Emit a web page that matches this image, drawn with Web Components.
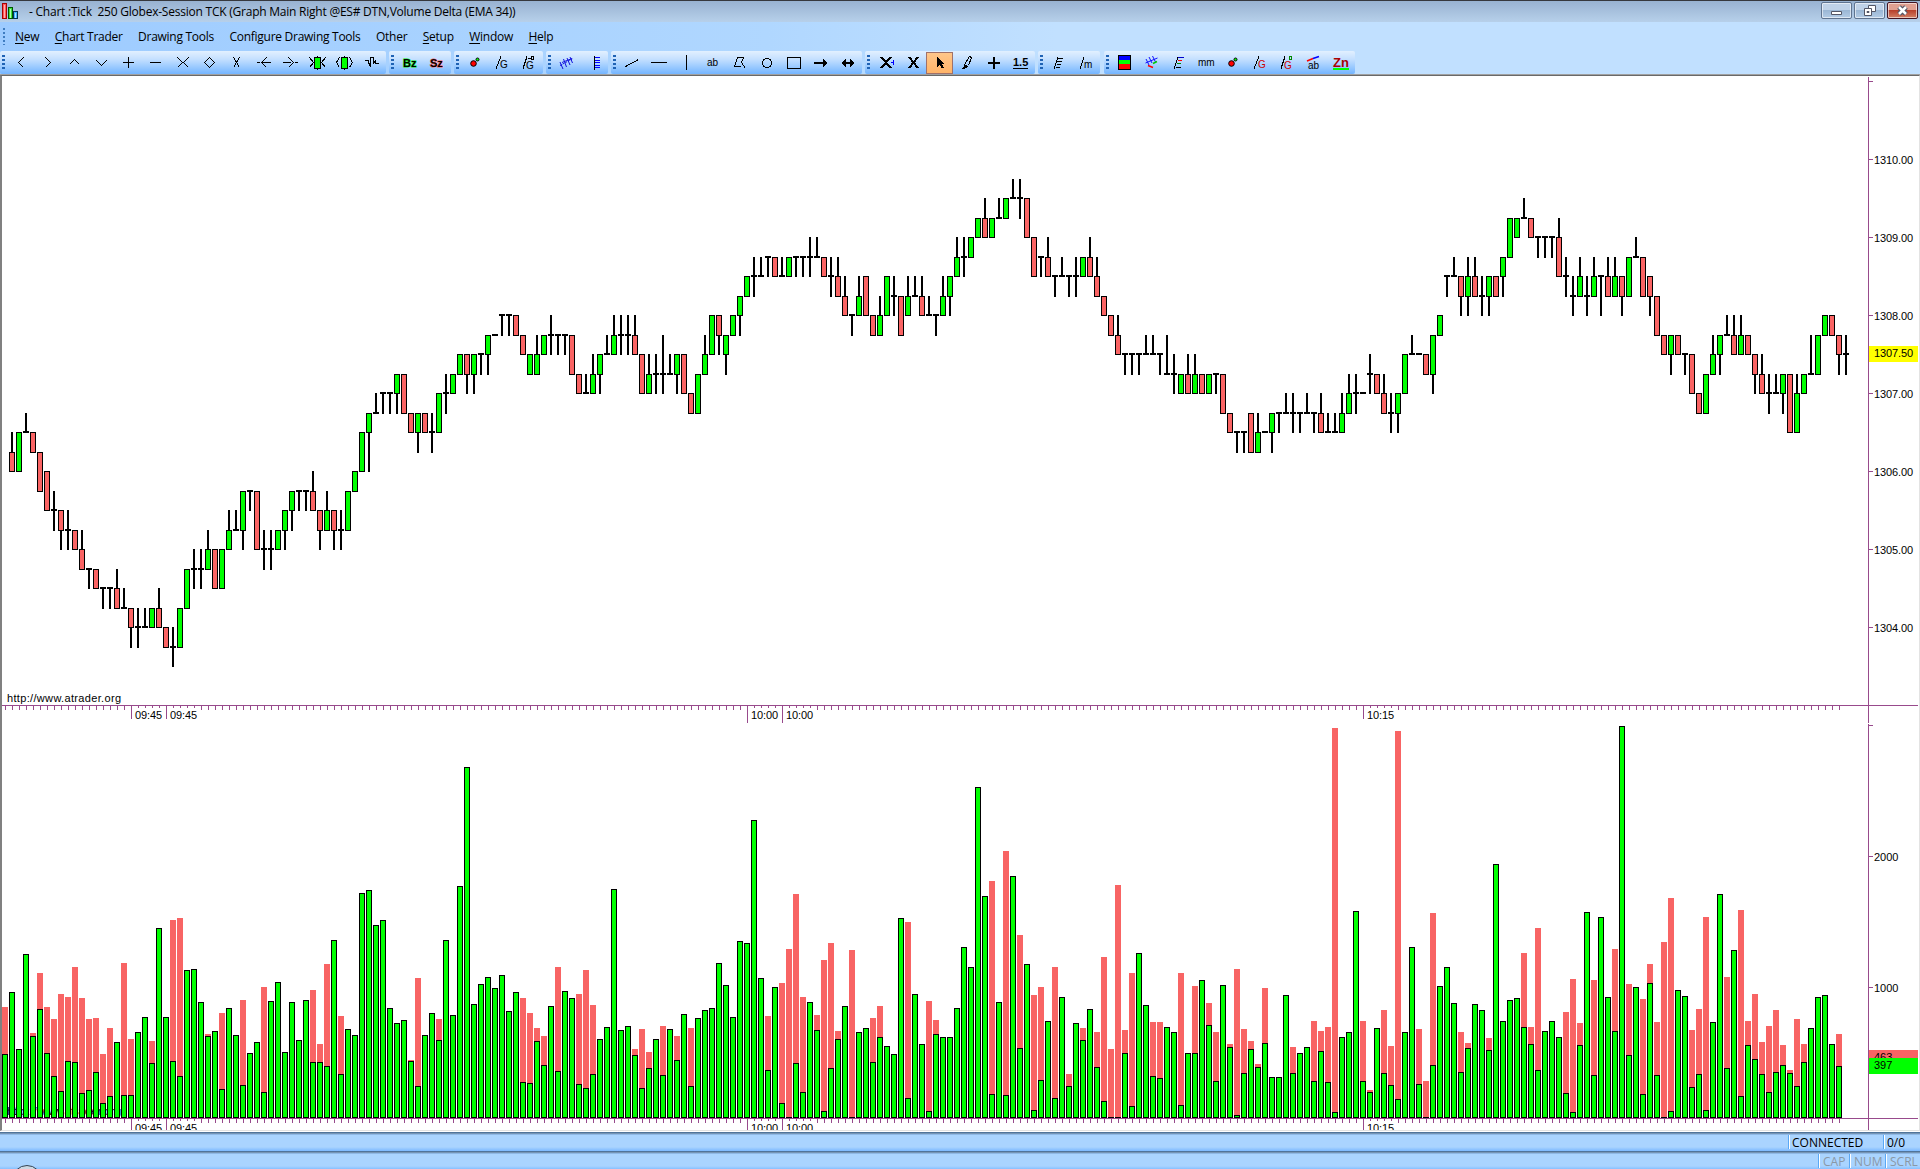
<!DOCTYPE html>
<html lang="en">
<head>
<meta charset="utf-8">
<title>Chart</title>
<style>
	html, body {height: 100%; margin: 0; overflow: hidden;}
	body {font-family: "Open Sans", "Noto Sans", sans-serif; font-size: 12px; color: #000;}
</style>
</head>
<body>
<chart-window></chart-window>
<script>
const define = (name, html, setup) => customElements.define(name, class extends HTMLElement {
	constructor() {
		super();
		this.attachShadow({mode: 'open'}).innerHTML = html;
	}
	connectedCallback() {setup && setup.call(this, this.shadowRoot);}
});

// one glyph per toolbar button, drawn on a 21x21 grid
const icons = {
	left: '<path d="M13.5 5.5l-5 5 5 5"/>',
	right: '<path d="M8.5 5.5l5 5-5 5"/>',
	up: '<path d="M5.5 12.5l5-5 5 5"/>',
	down: '<path d="M5.5 8.5l5 5 5-5"/>',
	plus: '<path d="M5 10.5h11M10.5 5v11"/>',
	minus: '<path d="M5 10.5h11"/>',
	hcross: '<path d="M5.5 5.5l5 5-5 5M16.5 5.5l-5 5 5 5"/>',
	diamond: '<path d="M10.5 5.5l5 5-5 5-5-5z"/>',
	vcross: '<path d="M7.5 5.5l3 5 3-5M7.5 15.5l3-5 3 5"/>',
	inl: '<path d="M4 10.5h3M13.5 5.5l-5 5 5 5M9 10.5h9"/>',
	inr: '<path d="M3 10.5h8M8.5 5.5l5 5-5 5M15 10.5h3"/>',
	gx: '<path d="M2.5 5.5l4 5-4 5M18.500 5.5l-4 5 4 5M10.500 3.500v14"/><path d="M7.500 5.500h6v11h-6z" fill="#0f0"/>',
	gb: '<path d="M5.5 5.5l-3 5 3 5M15.500 5.5l3 5-3 5M10.500 3.500v14"/><path d="M7.500 5.500h6v11h-6z" fill="#0f0"/>',
	wave: '<path d="M4 8.5h3.500v2l2 4v-9h3v6l2-3v3h3"/>',
	lines: '<g stroke="#11d" shape-rendering="auto"><path d="M4 13.500l13-7" stroke-dasharray="2 1"/><path d="M4 10l3 7M7.500 7l3 8M11 6l3 7M14 5l2.500 6"/><path d="M6 10.500l10-4"/></g>',
	ladder: '<path d="M11.500 4v14"/><path d="M12 5.500h5M12 8h5M12 10.500h5M12 13h5M12 15.500h5" stroke="#00f"/>',
	trend: '<path d="M4.5 14.5l13-7"/>',
	hline: '<path d="M3 10.5h16"/>',
	vline: '<path d="M11.500 3v15"/>',
	poly: '<path d="M8.500 5.500h6l-2 5 4 6M8.500 5.500l-3 9h6"/>',
	circle: '<ellipse cx="11" cy="11" rx="4.500" ry="4.500"/>',
	rect: '<path d="M4.500 5.500h13v11h-13z"/>',
	arrow: '<path d="M4 11h13" stroke-width="2"/><path d="M13.500 7v8M14.500 8v6M15.500 9v4"/>',
	arrows: '<path d="M5 11h12" stroke-width="2"/><path d="M13.500 7v8M14.500 8v6M15.500 9v4M8.500 7v8M7.500 8v6M6.500 9v4"/>',
	delx: '<path d="M6 5l10 11M16 5l-10 11" stroke-width="2"/><path d="M16 10.5h3M18.500 8v5" stroke="#00f"/>',
	del: '<path d="M7 5l9 11M16 5l-9 11" stroke-width="2"/>',
	pointer: '<path d="M7.5 4.500v11l3-3 2 4 2-1-2-4h3z" fill="#000" stroke="none"/>',
	pen: '<path d="M13.500 4.5l2 1-3 8-4 3v-4zM6.500 17l4-4"/>',
	cross: '<path d="M5 11h12M11 5v12" stroke-width="2"/>',
	flag: '<path d="M6 16.500l4-11M10 6.5h5M9 9.5h5M9 12.5h4M8 15.5h4"/>',
	bands: '<path d="M4 3h13v5h-13z" fill="#00f" stroke="none"/><path d="M4 8h13v4h-13z" fill="#0f0" stroke="none"/><path d="M4 12h13v5h-13z" fill="#f00" stroke="none"/><path d="M4.500 3.5h12v14h-12z"/>',
	fans: '<g shape-rendering="auto"><path d="M5 7l3 6M8 5l3 6M11.500 4l3 6M4.500 11l12-5" stroke="#11f"/><path d="M7 13.500l5 2" stroke="#f00" stroke-width="1.500"/><path d="M12 11.5l4-2" stroke="#0c0" stroke-width="1.500"/></g>',
	flagc: '<path d="M6 16.500l4-11M8 15.500h5"/><path d="M10 5.500h6" stroke="#00c"/><path d="M10 8.500h4" stroke="#f00"/><path d="M9 11.500h4" stroke="#080"/>',
	balls: '<g shape-rendering="auto"><circle cx="9.500" cy="11.500" r="2.800" fill="#f00"/><circle cx="13.500" cy="7.500" r="1.500" fill="#0f0"/></g>',
	gann: '<path d="M5 16.5l5-12"/><text x="9" y="16">G</text>',
	gann2: '<path d="M5 16.5l4-12M9.500 6.500h3"/><circle cx="14.500" cy="6" r="1.500"/><text x="8" y="17">G</text>',
	gannc: '<path d="M5 16.5l5-12"/><text x="9" y="16" fill="#c00">G</text>',
	gannc2: '<path d="M5 16.5l4-12"/><circle cx="14.500" cy="6" r="1.500" stroke="#080"/><text x="8" y="17" fill="#c00">G</text>',
	ab: '<text x="5" y="14">ab</text>',
	abc: '<g shape-rendering="auto" stroke-width="1.500"><path d="M4 9l6-2.500" stroke="#f00"/><path d="M10 6.500l6-2" stroke="#00f"/></g><text x="5" y="17">ab</text>',
	m: '<path d="M5 16.500l4-11"/><text x="9" y="16">m</text>',
	mm: '<text x="3" y="14">mm</text>',
	bz: '<text x="4" y="15" class="b" stroke="#0e0">Bz</text>',
	sz: '<text x="4" y="15" class="b" stroke="#f55">Sz</text>',
	num: '<text x="3" y="14" class="b">1.5</text><path d="M3 16.500h15"/>',
	zn: '<path d="M3 16h16v2h-16z" fill="#0f0" stroke="none"/><text x="3" y="15" class="z" fill="#a00">Zn</text>',
};

define('tool-button', `
<style>
	:host {display: flex; align-items: center; justify-content: center; width: 27px; height: 22px; box-sizing: border-box;}
	:host([on]) {background: linear-gradient(#ffc68a, #ffb469); border: 1px solid #a0716a;}
	svg {width: 21px; height: 21px; flex: none; fill: none; stroke: #000; shape-rendering: crispEdges;}
	text {font: 10px "Liberation Sans", sans-serif; fill: #000; stroke: none;}
	.b {font: bold 11px "Liberation Sans", sans-serif; stroke-width: 1px; paint-order: stroke;}
	.z {font: bold 13px "Liberation Sans", sans-serif;}
</style>
<svg viewBox="0 0 21 21"></svg>
`, function(root) {
	const svg = root.querySelector('svg');
	svg.innerHTML = icons[this.getAttribute('icon')];
	svg.querySelectorAll('text').forEach(t => {
		t.style.fill = t.getAttribute('fill');
		t.style.stroke = t.getAttribute('stroke');
	});
});

define('tool-group', `
<style>
	:host {
		display: flex; align-items: center; height: 23px; padding-right: 1px; border-radius: 2px;
		background: linear-gradient(#e2f0ff, #c5e0ff 35%, #a6d0ff 60%, #74b5ff);
	}
	i {
		width: 3px; height: 15px; margin: 0 2px;
		background: repeating-linear-gradient(#1f62b4 0 2px, transparent 2px 4px);
	}
</style>
<i></i><slot></slot>
`);

define('tool-bar', `
<style>
	:host {display: flex; height: 23px;}
	tool-group {flex: none;}
</style>
`, function(root) {
	const groups = [
		['left right up down plus minus hcross diamond vcross inl inr gx gb wave', 3],
		['bz sz', 3],
		['balls gann gann2', 3],
		['lines ladder', 3],
		['trend hline vline ab poly circle rect arrow arrows', 3],
		['delx del pointer pen cross num', 3],
		['flag m', 4],
		['bands fans flagc mm balls gannc gannc2 abc zn', 0],
	];
	root.innerHTML += groups.map(([names, gap]) => `<tool-group style="margin-right:${gap}px">${
		names.split(' ').map(n => `<tool-button icon="${n}"${n === 'pointer' ? ' on' : ''}></tool-button>`).join('')
	}</tool-group>`).join('');
});

define('title-bar', `
<style>
	:host {
		display: flex; align-items: center; height: 22px; box-sizing: border-box; padding-right: 2px;
		border-top: 1px solid #36383d; background: linear-gradient(#98b2d1, #b7d0ea);
	}
	.logo {width: 19px; height: 19px; margin-right: 10px; shape-rendering: crispEdges;}
	span {flex: 1; white-space: pre; font-size: 12px; letter-spacing: -.23px;}
	b {
		width: 31px; height: 17px; margin: 0 0 2px 2px; box-sizing: border-box; display: flex;
		align-items: center; justify-content: center; border: 1px solid #5f7490; border-radius: 2px;
		box-shadow: inset 0 0 0 1px #ffffff90; background: linear-gradient(#bfd2e8 50%, #9bb7d5 50%, #b3cce6);
	}
	b.x {border-color: #431422; background: linear-gradient(#e0a091 50%, #b8412c 50%, #d38065);}
	b svg {width: 13px; height: 11px;}
</style>
<svg class="logo" viewBox="0 0 19 19">
	<path d="M2.500 1.500h4v15h-4z" fill="#ff5a5a" stroke="#a00"/><path d="M4 3h1v13h-1z" fill="#ffb0b0"/>
	<path d="M8.500 5.500h4v11h-4z" fill="#3ce03c" stroke="#050"/><path d="M10 7h1v9h-1z" fill="#b0ffb0"/>
	<path d="M13.500 9.500h4v7h-4z" fill="#3cb4ff" stroke="#035"/><path d="M15 11h1v5h-1z" fill="#b4e4ff"/>
</svg>
<span>- Chart :Tick  250 Globex-Session TCK (Graph Main Right @ES# DTN,Volume Delta (EMA 34))</span>
<b><svg viewBox="0 0 13 11"><path d="M1.500 6.500h10v3h-10z" fill="#fff" stroke="#535666"/></svg></b>
<b><svg viewBox="0 0 13 11"><path d="M5.500.500h7v6h-7z" fill="#fff" stroke="#535666"/><path d="M1.500 3.500h7v7h-7z" fill="#fff" stroke="#535666"/><path d="M4 6.500h2v1h-2z" stroke="#535666"/></svg></b>
<b class="x"><svg viewBox="0 0 13 11"><path d="M3 2l7 7M10 2l-7 7" stroke="#535666" stroke-width="5"/><path d="M3 2l7 7M10 2l-7 7" stroke="#fff" stroke-width="2.500"/></svg></b>
`);

define('menu-bar', `
<style>
	:host {display: flex; align-items: center; height: 29px; font-size: 12px;}
	i {
		width: 2px; height: 17px; margin: 0 10px 0 3px;
		background: repeating-linear-gradient(#3f7cc0 0 2px, transparent 2px 4px);
	}
	nav {display: flex; gap: 15.5px; letter-spacing: -.27px;}
	u {text-underline-offset: 2px;}
</style>
<i></i>
<nav>
	<span><u>N</u>ew</span><span><u>C</u>hart Trader</span><span>Drawing Tools</span>
	<span>Configure Drawing Tools</span><span>Other</span><span><u>S</u>etup</span>
	<span><u>W</u>indow</span><span><u>H</u>elp</span>
</nav>
`);

const plotStyle = `
	:host {display: block;}
	svg {display: block; shape-rendering: crispEdges;}
	text {font: 11px "Liberation Sans", Arial, sans-serif;}
	.up {fill: #0f0; stroke: #000;}
	.down {fill: #fa6464; stroke: #000;}
	.ask {fill: #f86464;}
	.axis {fill: #984a8c;}
`;
const box = (x, y, w, h, cls) => `<rect x="${x}" y="${y}" width="${w}" height="${h}" class="${cls}"/>`;
const outlined = (x, y, w, h, cls) => box(x + .5, y + .5, w - 1, h - 1, cls);
const label = (x, y, text, width) => `<text x="${x}" y="${y}"${width ? ` textLength="${width}"` : ''}>${text}</text>`;
const STEP = 7;
const COUNT = 263;
const SITE = 'http://www.atrader.org';

// horizontal axis with its ticks; marks are [bar, length, caption]
const timeAxis = (y, marks) => {
	let out = box(2, y, 1916, 1, 'axis');
	for (let i = 0; i < COUNT; i++) out += box(5 + i * STEP, y + 1, 1, 4, 'axis');
	for (const [bar, size, text] of marks) {
		const x = 5 + bar * STEP;
		out += `<rect x="${x + 1}" y="${y + 3}" width="31" height="12" fill="#fff"/>`;
		out += box(x, y + 1, 1, size, 'axis') + label(x + 4, y + 14, text, 27);
	}
	return out;
};
const marks = [[18, 13, '09:45'], [23, 13, '09:45'], [106, 17, '10:00'], [111, 17, '10:00'], [194, 13, '10:15']];

// open/high/low/close, one letter per quarter point going down from a = 1310.00
const candles = `
poqq qoqo onoo oopp pprr qqss srts ssut tsut ttuu utvv vvwv vvww wwxw wwxw wvxx xwxx xxzy yxzy yxyy
yxyx xwyy yyzz zy{z zxzx xvxv vuwv vuwv vtvu uuww wuwu usut tstt trur rrsr rruu utvu utvu utut tsus
srtr rrsr rrsr rqss ssut trts ssut tsut trtr rqrq qoqo onqn nmnn mmnm mmnm mlnl llnn nnoo onpn nnoo
onpo omom mlnm mlml lklk kkml lkmk kklk kjlj jjjj iiji iiji iijj jjkk lklk ljlk kjkj jikj jjkj jjkj
jjll llmm mlmm mkml lkmk kjkk kikj jikj jikj jikk kkmm mkml lkml ljml lkll lkmk kkmm mmnn nlnl ljlk
kiki iikj kjlj jiji ihjh hghg gfhg gfgg ffgf ffgg gfgg gfgf ffgf ffgf fegf feff ffgg gfhg gfhh hgii
iiji igih ggii iijj jhji igig hgih hhjj igih hghh hgii ihii iiji igih hgig gegf fegf fefe eded dcee
eded dcdd dcdc cbcc cbdc ccee eegg ffgf fegg gghg gfgg gghg gfhg gfgf fegg gfhh hhii iijj jikk kklk
kklk kklk kjkk kjkk kklk ljll lkml mlml lkmm mkml llmm mlml llml llnn nnoo oopo oopo nnpp pnpo oooo
onpn nnon nmnn nmon nnon nmnn nnon nmoo onoo onoo omon nlnm mlnm mmmm lkml llmm mlnn nmon nmom mkmk
kjkk kkkk kkll ljmj jiji gghg gfgg ggih hfig gfhh hgih hgig gghh gfhf fdfd eded dcdd ddee eefe eefe
eefe edgg gfhg hgih hfhg hgih hfhg ggig gfhh hfhg ggih hfhf feff ffhh ggih hhjj jjkk kjlj jjkk kklk
kkmm mmnn nlnl ljlk kjlj jijj jikk kikj jjkk kkml lkmm mlnm mlmm mlnl lloo olom mlml ljll ljlj jiji
iijj jjlk kjlk`.trim().split(/\s+/);

define('price-pane', `<style>${plotStyle}</style><svg width="1918" height="647"></svg>`, function(root) {
	const top = 76;
	const level = c => Math.round(159 + 19.5 * (c.charCodeAt(0) - 97)) - top;
	let out = '';
	candles.forEach((bar, i) => {
		const [o, h, l, c] = [...bar].map(level);
		const x = 9 + i * STEP;
		out += box(x + 2, h, 2, l - h + 1, '');
		out += o === c ? box(x, o - 1, 6, 2, '')
			: outlined(x, Math.min(o, c), 6, Math.abs(c - o) + 1, c < o ? 'up' : 'down');
	});
	out += label(7, 702 - top, SITE, 114);
	out += timeAxis(705 - top, marks);
	out += box(1868, 1, 1, 646, 'axis') + box(1869, 81 - top, 4, 1, 'axis');
	for (let p = 1310; p > 1303; p--) {
		const y = 159 + (1310 - p) * 78 - top;
		out += box(1869, y, 4, 1, 'axis') + label(1874, y + 5, p + '.00', 39);
	}
	out += `<rect x="1869" y="${346 - top}" width="49" height="16" fill="#ff0"/>`;
	out += label(1874, 357 - top, '1307.50', 39);
	root.querySelector('svg').innerHTML = out;
});

// bid[/ask] bar tops, in pixels under the 3270 line of the scale; zero is 428
const volumes = `
364/317 302 359 264 346/343 319/283 363/317 386/329 401/304 371/307 372/277 403/308 400/329 382/328
413/364 406/338 352 405/273 405/349 342 327 373/351 238 327 371/230 386/228 280 279 312 346/344 341
399/323 318 345 395/310 363 352 402/297 311 292 362 312 350 310 372/300 372/354 376/274 250 384/326
339 345 203 200 235 230 318 333 330 371/370 396/288 345 323 350/329 250 325 196 77 314 294 287 298
285 321 302 392/308 393/323 351/338 375/346 316 381/277 301 308 394/304 398/280 384/315 349 337 199
340 336 365/359 398/339 378/362 349 385/336 339 370/346 324 396/338 328 320 318 273 295 327 251 253
130 288 380/326 297 413/293 427/259 373/204 402/307 312 340/325 421/270 378/253 349/341 316 427/260
342 338 372/328 347/316 356 364 228 408/232 304 354 421/311 344/330 347 347 318 257 277 97 206
404/191 312 405/161 186 358/245 274 420/305 390/297 331 408/277 307 396/384 333 350/338 319 377/342
411/267 427/359 427/195 363/340 416/283 263 315 386/332 388/332 337 342 415/283 363 363/296 290
335/313 391/342 295 357/354 425/279 383/339 359/351 377/374 353/298 387 387 305 383/357 363 357
391/331 361/341 392/337 422/38 347 342 221 391/331 402/400 338 383/320 395/356 409/41 342 257
394/339 427/391 375/223 296 277 313 382/342 358/353 314 320 360/348 174 331 310 308 337/263 354/337
380/238 341 331 347 403/322 422/289 355/333 222 385/290 227 307 341/259 36 365/294 297 404/309
293/274 385/332 427/252 421/208 300 306 397/340 384/319 420/227 332 204 378/287 260 406/220 355/331
369/304 384/352 402/336 382/320 375/355 383/380 396/329 372/354 338 307 305 354 376/344`.trim().split(/\s+/);

define('volume-pane', `<style>${plotStyle}</style><svg width="1918" height="407"></svg>`, function(root) {
	const top = 723, zero = 1118 - top;
	const y0 = zero - 428;
	// the bars are painted over the site name
	let out = label(7, 1115 - top, SITE, 114);
	volumes.forEach((bar, i) => {
		const [bid, ask] = bar.split('/').map(Number);
		const x = 2 + i * STEP;
		if (ask) out += box(x, ask + y0, 6, 428 - ask, 'ask');
		out += bid > 426 ? box(x, zero - 1, 6, 1, '') : outlined(x, bid + y0, 6, 428 - bid, 'up');
	});
	out += timeAxis(zero, marks);
	out += box(1868, 1, 1, 406, 'axis') + box(1869, 725 - top, 4, 1, 'axis');
	out += box(1869, 856 - top, 4, 1, 'axis') + label(1874, 861 - top, '2000');
	out += box(1869, 987 - top, 4, 1, 'axis') + label(1874, 992 - top, '1000');
	out += `<rect x="1869" y="${1050 - top}" width="49" height="16" fill="#f86464"/>${label(1874, 1061 - top, '463')}`;
	out += `<rect x="1869" y="${1058 - top}" width="49" height="16" fill="#0f0"/>${label(1874, 1069 - top, '397')}`;
	root.querySelector('svg').innerHTML = out;
});

define('status-bar', `
<style>
	:host {
		display: flex; justify-content: flex-end; height: 19px; box-sizing: border-box; overflow: hidden;
		border-top: 1px solid #50749a;
		background: linear-gradient(#7695b5 1px, #8fb9e6 1px 2px, #aad4ff 2px 14px, #7cb9ff);
	}
	::slotted(span) {
		height: 14px; line-height: 15px; margin-top: 2px; padding-left: 3px; box-sizing: border-box;
		border-left: 1px solid #5aa8f5; box-shadow: inset 1px 0 #fff;
	}
</style>
<slot></slot>
`);

define('chart-window', `
<style>
	:host {
		display: flex; flex-direction: column; width: 1920px; height: 1169px; overflow: hidden;
		background: linear-gradient(90deg, #9dcbff, #b0d7ff 40%, #c1e0ff 55%);
	}
	title-bar, menu-bar, tool-bar, status-bar {flex: none;}
	main {
		height: 1058px; flex: none; box-sizing: border-box; background: #fff; overflow: hidden;
		border-top: 1px solid #a0a0a0;
	}
	.frame {height: 1056px; box-sizing: border-box; border: solid; border-width: 1px 1px 1px 2px; border-color: #696969 #e3e3e3 #e3e3e3 #808080;}
	.plots {margin-left: -2px;}
	.dim {color: #8a98a6; padding-left: 4px;}
	.orb {position: absolute; left: 12px; top: 1165px; width: 28px; height: 28px; border-radius: 50%; border: 1px solid #345; background: #cdd8e2;}
</style>
<title-bar></title-bar>
<menu-bar></menu-bar>
<tool-bar></tool-bar>
<main><div class="frame"><div class="plots"><price-pane></price-pane><volume-pane></volume-pane></div></div></main>
<status-bar>
	<span style="width:95px">CONNECTED</span><span style="width:37px">0/0</span>
</status-bar>
<status-bar>
	<span class="dim" style="width:31px">CAP</span><span class="dim" style="width:36px">NUM</span><span class="dim" style="width:35px">SCRL</span>
</status-bar>
<div class="orb"></div>
`);
</script>
</body>
</html>
